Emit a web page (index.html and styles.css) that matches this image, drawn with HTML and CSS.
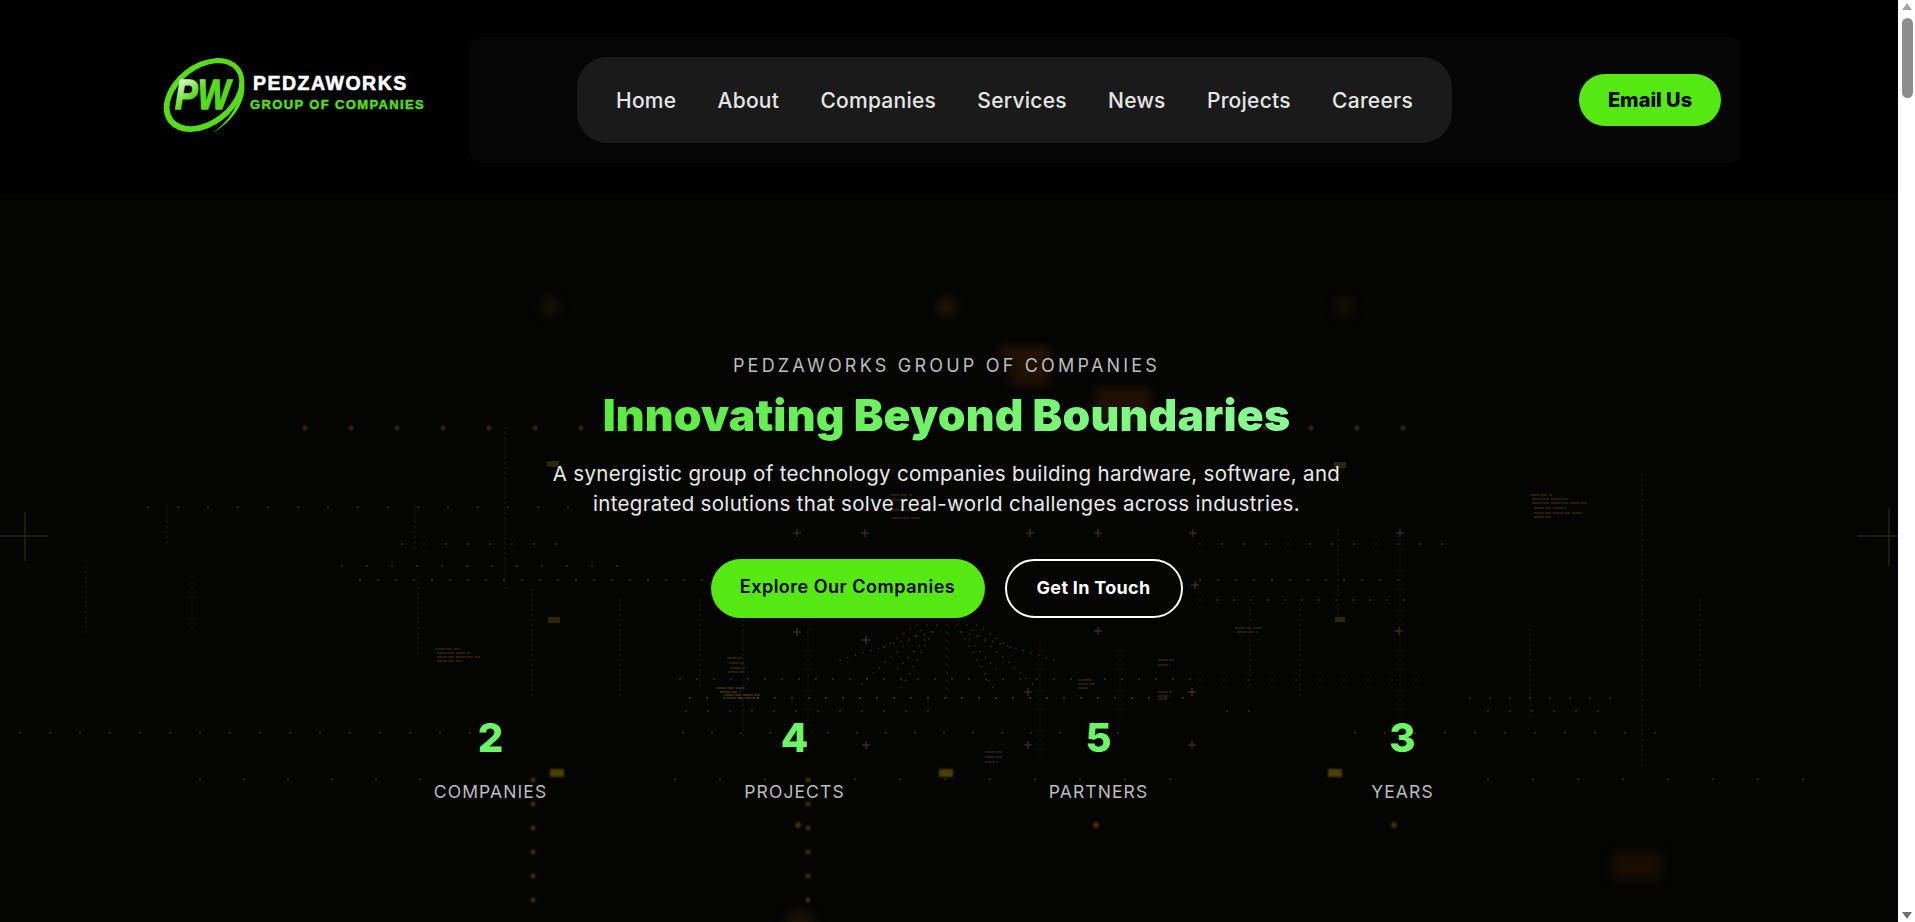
FILE: index.html
```html
<!DOCTYPE html>
<html lang="en">
<head>
    <meta charset="UTF-8">
    <title>Pedzaworks Group of Companies</title>
    <link rel="stylesheet" href="styles.css">
</head>
<body>
<div class="page">
    <header class="site-header">
        <a class="logo" href="#">
            <svg class="logo-mark" viewBox="0 0 84 80" width="84" height="80">
                <defs>
                    <linearGradient id="pwFill" x1="0" y1="0" x2="1" y2="1">
                        <stop offset="0" stop-color="#ffffff"/>
                        <stop offset="0.2" stop-color="#c4f7a8"/>
                        <stop offset="0.42" stop-color="#5cdc20"/>
                        <stop offset="1" stop-color="#4fd215"/>
                    </linearGradient>
                </defs>
                <g transform="rotate(-38 42 38)">
                    <path fill="#56dc18" fill-rule="evenodd" d="M-3 38a45 31 0 1 0 90 0a45 31 0 1 0-90 0ZM3 38a39.500 25.500 0 1 0 79 0a39.500 25.500 0 1 0-79 0Z"/>
                </g>
                <path fill="#56dc18" d="M80 17C88 37 76 62 49 77 70 63 82 41 78 19Z"/>
                <text class="logo-pw" x="13" y="52" textLength="55" lengthAdjust="spacingAndGlyphs" fill="url(#pwFill)" stroke="url(#pwFill)" stroke-width="1.4">PW</text>
            </svg>
            <span class="logo-text">
                <span class="logo-name">PEDZAWORKS</span>
                <span class="logo-sub">GROUP OF COMPANIES</span>
            </span>
        </a>
        <div class="nav-panel">
            <nav class="main-nav">
                <a href="#">Home</a>
                <a href="#">About</a>
                <a href="#">Companies</a>
                <a href="#">Services</a>
                <a href="#">News</a>
                <a href="#">Projects</a>
                <a href="#">Careers</a>
            </nav>
            <a class="email-btn" href="#">Email Us</a>
        </div>
    </header>

    <section class="hero">
        <!-- dim circuit backdrop, coordinates are page pixels -->
        <svg class="hero-bg" viewBox="0 195 1898 727" preserveAspectRatio="none">
            <g class="glow">
                <circle cx="550" cy="307" r="10" fill="#141004"/>
                <circle cx="947" cy="307" r="10" fill="#1f1505"/>
                <circle cx="1344" cy="307" r="10" fill="#141004"/>
                <rect x="1000" y="347" width="50" height="10" fill="#2c1703"/>
                <rect x="1010" y="358" width="40" height="28" fill="#1f1103"/>
                <rect x="1095" y="388" width="56" height="36" fill="#1f1203"/>
                <rect x="1612" y="852" width="50" height="28" fill="#170d02"/>
                <circle cx="800" cy="925" r="16" fill="#191002"/>
            </g>
            <g class="cross" stroke="#1f1b0c" stroke-width="2" fill="none">
                <path d="M0 536H48M25 512V561"/>
                <path d="M1858 536H1898M1889 508V566"/>
            </g>
            <g class="plus" stroke="#4c3f0e" stroke-width="1" fill="none">
                <path d="M793 533h8M797 529v8M861 533h8M865 529v8M1026 533h8M1030 529v8M1094 533h8M1098 529v8M1189 533h8M1193 529v8M1396 533h8M1400 529v8"/>
                <path d="M793 632h8M797 628v8M1191 585h8M1195 581v8M1395 631h8M1399 627v8M862 640h8M866 636v8"/>
                <path d="M1024 692h8M1028 688v8M1094 631h8M1098 627v8M862 745h8M866 741v8M1024 745h8M1028 741v8M1188 692h8M1192 688v8M1188 745h8M1192 741v8"/>
            </g>
            <g class="dots-big" fill="none" stroke-linecap="round">
                <path stroke="#3f2a08" stroke-width="5" stroke-dasharray="0 46" d="M305 428H630"/>
                <path stroke="#3f2a08" stroke-width="5" stroke-dasharray="0 46" d="M1265 428H1410"/>
                <path stroke="#4a2e07" stroke-width="5" stroke-dasharray="0 24" d="M533 780V920"/>
                <path stroke="#4a2e07" stroke-width="5" stroke-dasharray="0 24" d="M808 780V920"/>
                <path stroke="#4a2c06" stroke-width="6" stroke-dasharray="0 298" d="M798 825H1400"/>
                <path stroke="#4a4106" stroke-width="8" stroke-dasharray="14 375" stroke-linecap="butt" d="M550 773H1350"/>
            </g>
            <g class="dots-small" fill="none" stroke="#3d2e08" stroke-linecap="round" stroke-width="2">
                <path stroke-dasharray="0 30" d="M148 507H580"/>
                <path stroke-dasharray="0 22" d="M402 544H560"/>
                <path stroke-dasharray="0 25" d="M342 566H620"/>
                <path stroke-dasharray="0 18" d="M360 580H730"/>
                <path stroke-dasharray="0 22" d="M1200 544H1450"/>
                <path stroke-dasharray="0 18" d="M1200 580H1410"/>
                <path stroke-dasharray="0 17" d="M1200 600H1420"/>
                <path stroke-dasharray="0 24" d="M1200 680H1440"/>
                <path stroke-dasharray="0 20" d="M1470 698H1620"/>
                <path stroke-dasharray="0 22" d="M1227 711H1260"/>
                <path stroke-dasharray="0 22" d="M1488 711H1610"/>
                <path stroke-dasharray="0 30" d="M1355 733H1660"/>
                <path stroke-dasharray="0 29" d="M683 733H1130"/>
                <path stroke-dasharray="0 45" d="M1488 779H1820"/>
                <path stroke-dasharray="0 45" d="M675 779H1180"/>
                <path stroke-dasharray="0 44" d="M200 779H460"/>
                <path stroke-dasharray="0 17" d="M680 679H1200"/>
                <path stroke-dasharray="0 17" d="M690 698H1200" stroke="#54390a"/>
                <path stroke-dasharray="0 22" d="M686 711H940"/>
                <path stroke-dasharray="0 30" d="M20 733H500"/>
            </g>
            <g class="funnel" fill="none" stroke="#4a3008" stroke-linecap="round" stroke-width="1.6" stroke-dasharray="0 8">
                <path d="M947 625V700M937 625L900 690M927 625L860 685M957 625L994 690M967 625L1034 685"/>
                <path d="M917 625L880 650M977 625L1014 650M932 632L840 660M962 632L1054 660M925 640L895 672M969 640L999 672"/>
            </g>
            <g class="dots-line" fill="none" stroke="#2b2108" stroke-linecap="round" stroke-width="1.5" stroke-dasharray="0 5">
                <path d="M505 428V590M415 507V550M167 507V547M86 567V633M192 583V630M418 583V655M532 590V700"/>
                <path d="M1642 475V770M1400 530V720M1338 530V620M1250 610V690M1300 600V700M1120 650V720M1040 640V760"/>
                <path d="M620 600V700M700 600V690M743 620V740M808 620V730M1530 630V720M1700 600V690"/>
            </g>
            <g class="code" fill="none" stroke="#4c340a" stroke-width="1.2" stroke-dasharray="10 1 6 2">
                <path d="M435 649H460M437 653H470M437 657H480M437 661H462"/>
                <path d="M1530 495H1552M1532 499H1570M1532 503H1588M1534 508H1566M1534 513H1582M1534 517H1552"/>
                <path d="M890 495H912M892 500H925M892 510H915M892 518H920"/>
                <path d="M727 658H742M729 663H744M730 668H745M728 672H746"/>
                <path d="M717 688H745M720 692H740M724 695H760M726 698H759" stroke="#63490c"/>
                <path d="M985 752H1002M985 757H1004M985 762H998"/>
                <path d="M1158 660H1174M1158 665H1170"/>
                <path d="M1078 680H1092M1078 684H1096M1078 688H1088"/>
                <path d="M1158 692H1172M1158 696H1170M1158 699H1166"/>
                <path d="M1235 628H1262M1237 632H1258"/>
            </g>
            <g class="tags" fill="#2c2606">
                <rect x="547" y="461" width="12" height="6"/>
                <rect x="548" y="617" width="12" height="6"/>
                <rect x="1334" y="462" width="12" height="6"/>
                <rect x="1335" y="617" width="10" height="5"/>
            </g>
        </svg>

        <div class="hero-inner">
            <p class="tagline">PEDZAWORKS GROUP OF COMPANIES</p>
            <h1 class="hero-title">Innovating Beyond Boundaries</h1>
            <p class="hero-text">A synergistic group of technology companies building hardware, software, and<br>integrated solutions that solve real-world challenges across industries.</p>
            <div class="hero-actions">
                <a class="btn btn-primary" href="#">Explore Our Companies</a>
                <a class="btn btn-outline" href="#">Get In Touch</a>
            </div>
            <div class="stats">
                <div class="stat"><span class="stat-num">2</span><span class="stat-label">COMPANIES</span></div>
                <div class="stat"><span class="stat-num">4</span><span class="stat-label">PROJECTS</span></div>
                <div class="stat"><span class="stat-num">5</span><span class="stat-label">PARTNERS</span></div>
                <div class="stat"><span class="stat-num">3</span><span class="stat-label">YEARS</span></div>
            </div>
        </div>
    </section>
</div>
<div class="scrollbar">
    <span class="arrow-up"></span>
    <span class="thumb"></span>
    <span class="arrow-down"></span>
</div>
</body>
</html>
```

FILE: styles.css
```css
html, body {
    margin: 0;
    height: 922px;
    overflow: hidden;
}
body {
    display: flex;
    background-color: #000;
    font-family: Inter, "Noto Sans", sans-serif;
}
a {
    text-decoration: none;
}
.page {
    flex: 1;
    display: flex;
    flex-direction: column;
    min-width: 0;
}

/* Header */
.site-header {
    height: 195px;
    flex: none;
    display: flex;
    align-items: flex-start;
    padding-left: 164px;
    background-color: #000;
}
.logo {
    width: 306px;
    margin-top: 57px;
    display: flex;
    gap: 7px;
    flex: none;
}
.logo-mark {
    flex: none;
    margin-left: -2px;
}
.logo-pw {
    font-family: "Liberation Sans", Arial, sans-serif;
    font-size: 42px;
    font-weight: 700;
    font-style: italic;
}
.logo-text {
    display: flex;
    flex-direction: column;
    margin-top: 14px;
    font-family: "Liberation Sans", Arial, sans-serif;
    font-weight: 700;
    white-space: nowrap;
}
.logo-name {
    color: #fff;
    font-size: 19.5px;
    line-height: 24px;
    letter-spacing: 1.5px;
    -webkit-text-stroke: 0.6px #fff;
}
.logo-sub {
    color: #56dc18;
    font-size: 13px;
    line-height: 19px;
    letter-spacing: 1.37px;
    margin-left: -3px;
    -webkit-text-stroke: 0.5px #56dc18;
}
.nav-panel {
    width: 1271px;
    height: 126px;
    margin-top: 37px;
    box-sizing: border-box;
    padding: 0 20px 0 107px;
    display: flex;
    align-items: center;
    justify-content: space-between;
    background-color: #050505;
    border-radius: 12px;
}
.main-nav {
    width: 875px;
    height: 86px;
    box-sizing: border-box;
    padding: 0 39px;
    display: flex;
    align-items: center;
    justify-content: space-between;
    background-color: #1a1a1a;
    border-radius: 30px;
}
.main-nav a {
    color: #e6e6e6;
    font-size: 21px;
    font-weight: 500;
    letter-spacing: 0.25px;
}
.email-btn {
    width: 142px;
    height: 52px;
    display: flex;
    align-items: center;
    justify-content: center;
    background-color: #56e813;
    color: #000;
    border-radius: 26px;
    font-size: 20px;
    font-weight: 800;
}

/* Hero */
.hero {
    flex: 1;
    position: relative;
    background-color: #040403;
    overflow: hidden;
}
.hero-bg {
    position: absolute;
    inset: 0;
    width: 100%;
    height: 100%;
}
.glow {
    filter: blur(5px);
}
.dots-big {
    filter: blur(1px);
}
.cross {
    filter: blur(0.6px);
}
.hero-inner {
    position: relative;
    padding: 158px 5px 0 0;
    display: flex;
    flex-direction: column;
    align-items: center;
    text-align: center;
}
.tagline {
    margin: 0;
    color: #bdbdbd;
    font-size: 18px;
    line-height: 26px;
    letter-spacing: 3.2px;
}
.hero-title {
    margin: 6.500px 0 0;
    font-size: 44.500px;
    font-weight: 900;
    line-height: 58px;
    letter-spacing: 0.15px;
    background: linear-gradient(90deg, #5aea3c, #8afb96);
    -webkit-background-clip: text;
    background-clip: text;
    color: transparent;
}
.hero-text {
    margin: 15.500px 0 0;
    color: #e8ece8;
    font-size: 20.500px;
    line-height: 29.500px;
    letter-spacing: 0.32px;
}
.hero-actions {
    margin-top: 40.500px;
    display: flex;
    gap: 20px;
}
.btn {
    height: 59px;
    box-sizing: border-box;
    display: flex;
    align-items: center;
    justify-content: center;
    border-radius: 30px;
    font-size: 18px;
    font-weight: 600;
    letter-spacing: 0.5px;
}
.btn-primary {
    width: 274px;
    padding-bottom: 4px;
    background-color: #56e813;
    color: #000;
}
.btn-outline {
    width: 178px;
    padding-bottom: 1px;
    border: 2px solid #fff;
    color: #fff;
    font-weight: 700;
    letter-spacing: 0.3px;
}
.stats {
    width: 1216px;
    margin-top: 100.500px;
    display: grid;
    grid-template-columns: repeat(4, 1fr);
}
.stat {
    display: flex;
    flex-direction: column;
    align-items: center;
}
.stat-num {
    color: #6cf565;
    font-size: 40px;
    font-weight: 800;
    line-height: 40px;
}
.stat-label {
    margin-top: 22px;
    color: #bdbdbd;
    font-size: 17.500px;
    line-height: 24px;
    letter-spacing: 1.1px;
}

/* Drawn scrollbar */
.scrollbar {
    width: 17px;
    flex: none;
    position: relative;
    background-color: #fff;
}
.thumb {
    position: absolute;
    left: 4px;
    top: 18px;
    width: 11px;
    height: 80px;
    background-color: #8d8d8d;
    border-radius: 6px;
}
.arrow-up, .arrow-down {
    position: absolute;
    left: 4px;
    width: 0;
    height: 0;
    border-left: 5.500px solid transparent;
    border-right: 5.500px solid transparent;
}
.arrow-up {
    top: 3px;
    border-bottom: 7px solid #a3a3a3;
}
.arrow-down {
    bottom: 3px;
    border-top: 7px solid #6f6f6f;
}
```
